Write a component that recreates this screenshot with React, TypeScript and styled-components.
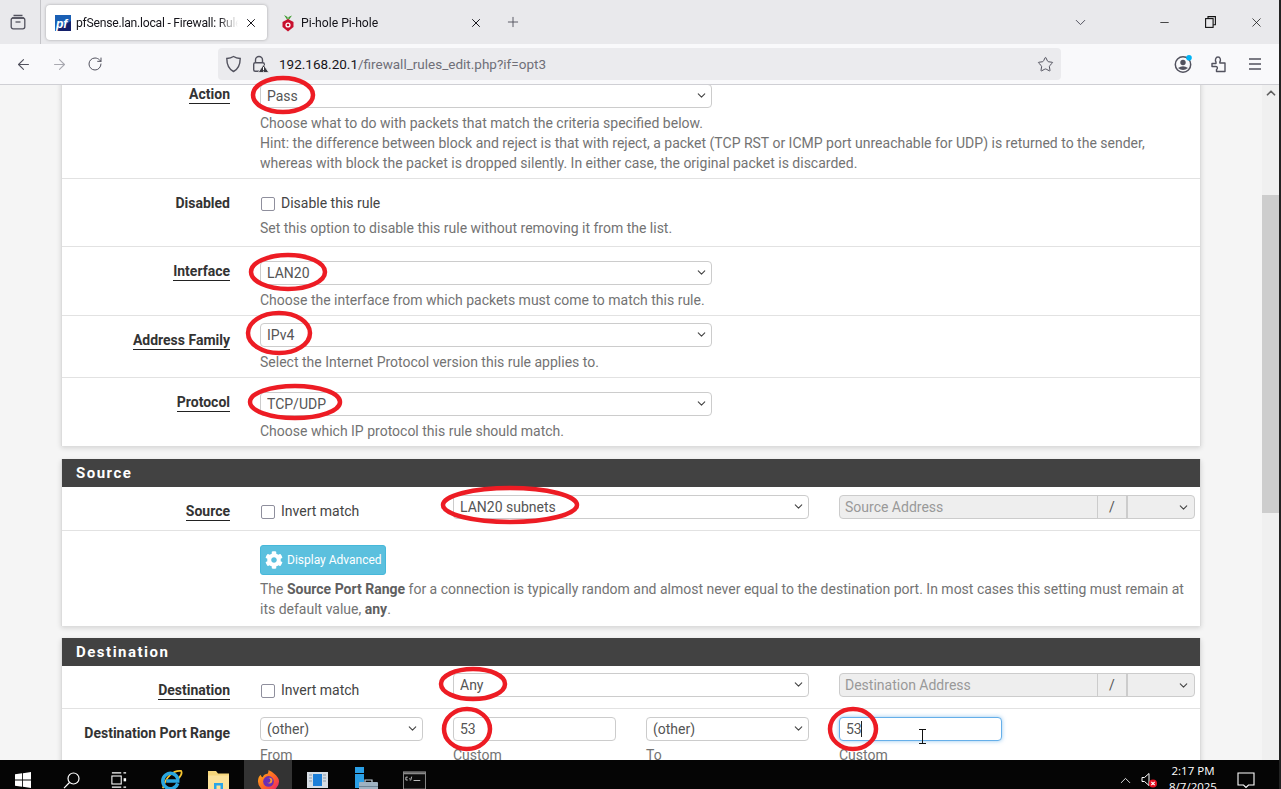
import React from "react";
import styled, { createGlobalStyle } from "styled-components";
import { ArrowLeft, ArrowRight, ChevronDown, ChevronUp, Minus, Plus, RotateCw, Star, X } from "lucide-react";
import { FaCog } from "react-icons/fa";

const GlobalStyle = createGlobalStyle`
  html, body {
    margin: 0;
    padding: 0;
    height: 100%;
    overflow: hidden;
    background: #222;
  }
  * {
    box-sizing: border-box;
  }
`;

const Screen = styled.div`
  position: relative;
  width: 1281px;
  height: 789px;
  padding-right: 2px;
  background: #222;
  overflow: hidden;
  font-family: Roboto, "Liberation Sans", sans-serif;
  display: flex;
  flex-direction: column;
`;

/* browser chrome */
const TabStrip = styled.div`
  height: 44px;
  flex: none;
  background: #e9e9ec;
  display: flex;
  align-items: center;
`;

const SideButton = styled.div`
  width: 41px;
  height: 44px;
  flex: none;
  display: flex;
  align-items: center;
  justify-content: center;
  border-right: 1px solid #c4c4c8;
  padding-right: 5px;
  margin-right: 5px;
  color: #52525e;
`;

const Tab = styled.div<{ $active?: boolean }>`
  width: 221px;
  height: 35px;
  flex: none;
  display: flex;
  align-items: center;
  padding: 0 8px 0 9px;
  gap: 5px;
  border-radius: 4px;
  background: ${(p) => (p.$active ? "#fff" : "transparent")};
  box-shadow: ${(p) => (p.$active ? "0 0 3px rgba(0,0,0,.3)" : "none")};
  font-size: 12.2px;
  color: #15141a;
  margin-top: 1px;
  margin-right: ${(p) => (p.$active ? "4px" : "0")};
`;

const TabTitle = styled.span<{ $tight?: boolean }>`
  flex: 1;
  overflow: hidden;
  white-space: nowrap;
  letter-spacing: ${(p) => (p.$tight ? "-0.25px" : "0")};
  -webkit-mask-image: linear-gradient(to right, #000 88%, transparent);
  mask-image: linear-gradient(to right, #000 88%, transparent);
`;

const TabClose = styled.span`
  width: 16px;
  display: flex;
  justify-content: center;
  color: #15141a;
`;

const NewTab = styled.div`
  width: 24px;
  display: flex;
  justify-content: center;
  color: #52525e;
  margin-left: 9px;
`;

const StripSpacer = styled.div`
  flex: 1;
`;

const ListTabs = styled.div`
  width: 30px;
  display: flex;
  justify-content: center;
  color: #52525e;
  margin-right: 46px;
`;

const WinButton = styled.div`
  width: 46px;
  height: 44px;
  display: flex;
  align-items: center;
  justify-content: center;
  color: #111;
`;

const ToolBar = styled.div`
  height: 41px;
  flex: none;
  background: #f9f9fb;
  border-bottom: 1px solid #cfcfd4;
  display: flex;
  align-items: center;
`;

const NavButton = styled.div<{ $muted?: boolean; $w?: number }>`
  width: ${(p) => p.$w ?? 36}px;
  flex: none;
  display: flex;
  justify-content: center;
  color: ${(p) => (p.$muted ? "#a9a9b0" : "#52525e")};
`;

const BackButton = styled(NavButton)`
  padding-left: 5px;
`;

const UrlBar = styled.div`
  width: 843px;
  height: 32px;
  flex: none;
  margin: 0 104px 0 105px;
  background: #ebebee;
  border-radius: 4px;
  display: flex;
  align-items: center;
  padding: 0 7px 0 7px;
  font-size: 13.5px;
  color: #15141a;
`;

const UrlIcons = styled.div`
  display: flex;
  align-items: center;
  gap: 10px;
  margin-right: 10px;
  color: #52525e;
`;

const UrlText = styled.span`
  flex: 1;
  white-space: nowrap;
`;

const UrlPath = styled.span`
  color: #6f6f78;
`;

/* page */
const Viewport = styled.div`
  flex: 1;
  min-height: 0;
  display: flex;
  background: #f5f5f5;
  overflow: hidden;
`;

const Page = styled.div`
  flex: 1;
  min-width: 0;
  padding: 0 61px 0 61px;
  margin-top: -15px;
`;

const Panel = styled.section<{ $gap?: number }>`
  background: #fff;
  border-left: 1px solid #dcdcdc;
  border-right: 1px solid #dcdcdc;
  box-shadow: 0 2px 5px rgba(0, 0, 0, 0.14);
  margin-bottom: ${(p) => p.$gap ?? 12}px;
  width: 1140px;
`;

const PanelHeading = styled.h2`
  margin: 0;
  height: 28px;
  padding: 0 14px;
  background: #424242;
  color: #fff;
  font-size: 15px;
  font-weight: 700;
  letter-spacing: 1.5px;
  line-height: 28px;
`;

const Row = styled.div<{ $end?: number; $last?: boolean }>`
  display: flex;
  align-items: flex-start;
  padding-bottom: ${(p) => p.$end ?? 5}px;
  border-bottom: ${(p) => (p.$last ? "0" : "1px solid #e2e2e2")};
`;

const LabelCell = styled.div`
  width: 168px;
  flex: none;
  padding-top: 14px;
  text-align: right;
  font-size: 14px;
  line-height: 20px;
  font-weight: 700;
  color: #333;
`;

const Linked = styled.span`
  border-bottom: 1px solid #222;
  padding-bottom: 1px;
`;

const ControlCell = styled.div<{ $top: number }>`
  flex: 1;
  min-width: 0;
  margin-left: 30px;
  padding-top: ${(p) => p.$top}px;
`;

const FieldGrid = styled.div`
  display: grid;
  grid-template-columns: repeat(5, 163px);
  column-gap: 30px;
  align-items: start;
`;

const Span2 = styled.div`
  grid-column: span 2;
`;

const Help = styled.div`
  margin-top: 5px;
  width: 925px;
  font-size: 14px;
  line-height: 20px;
  color: #737373;

  b {
    color: #5f5f5f;
  }
`;

const CheckLine = styled.label<{ $nudge?: number }>`
  display: flex;
  align-items: center;
  gap: 6px;
  height: 20px;
  padding-left: 1px;
  margin-top: ${(p) => p.$nudge ?? 0}px;
  font-size: 14px;
  color: #444;
`;

const CheckBox = styled.input.attrs({ type: "checkbox" })`
  appearance: none;
  width: 14px;
  height: 14px;
  margin: 1px 0 0;
  border: 1px solid #8f8f9d;
  border-radius: 2px;
  background: #fff;
`;

const SelectWrap = styled.div<{ $width?: number }>`
  position: relative;
  width: ${(p) => (p.$width ? `${p.$width}px` : "100%")};
  height: 24px;
`;

const Select = styled.select`
  appearance: none;
  display: block;
  width: 100%;
  height: 24px;
  padding: 0 20px 0 6px;
  border: 1px solid #ccc;
  border-radius: 4px;
  background: #fff;
  font: 14px Roboto, sans-serif;
  color: #555;
  outline: none;
`;

const SelectArrow = styled.span`
  position: absolute;
  right: 4px;
  top: 5px;
  display: flex;
  color: #444;
  pointer-events: none;
`;

const TextInput = styled.input<{ $focused?: boolean }>`
  display: block;
  width: 100%;
  height: 24px;
  padding: 0 6px;
  border: 1px solid ${(p) => (p.$focused ? "#66afe9" : "#ccc")};
  border-radius: 4px;
  background: #fff;
  font: 14px Roboto, sans-serif;
  color: #555;
  outline: none;
  box-shadow: ${(p) => (p.$focused ? "0 0 4px rgba(102,175,233,.7)" : "none")};
`;

const InputWrap = styled.div`
  position: relative;
`;

const Caret = styled.span`
  position: absolute;
  left: 22px;
  top: 4px;
  width: 1px;
  height: 16px;
  background: #222;
`;

const AddressGroup = styled.div`
  display: flex;
  height: 24px;
  border: 1px solid #ccc;
  border-radius: 4px;
  background: #eee;
  color: #777;
`;

const AddressInput = styled.input`
  flex: 1;
  min-width: 0;
  border: 0;
  padding: 0 5px;
  background: transparent;
  font: 14px Roboto, sans-serif;
  outline: none;

  &::placeholder {
    color: #999;
    opacity: 1;
  }
`;

const AddressSlash = styled.span`
  width: 31px;
  flex: none;
  border-left: 1px solid #ccc;
  border-right: 2px solid #ccc;
  text-align: center;
  font-size: 14px;
  line-height: 22px;
  color: #555;
`;

const MaskSelect = styled.div`
  position: relative;
  width: 66px;
  flex: none;
`;

const SubLabel = styled.div`
  margin-top: 4px;
  font-size: 14px;
  line-height: 20px;
  color: #737373;
`;

const AdvancedButton = styled.button`
  display: flex;
  align-items: center;
  gap: 4px;
  width: 126px;
  height: 30px;
  padding: 0 0 0 4px;
  margin-bottom: -1px;
  border: 1px solid #46b8da;
  border-radius: 3px;
  background: #5bc0de;
  color: #fff;
  font: 12px Roboto, sans-serif;
  white-space: nowrap;
`;

/* scrollbar */
const ScrollTrack = styled.div`
  width: 17px;
  flex: none;
  margin-left: auto;
  background: #f0f0f0;
  display: flex;
  flex-direction: column;
`;

const ScrollUp = styled.div`
  height: 110px;
  flex: none;
  display: flex;
  justify-content: center;
  align-items: flex-start;
  color: #606060;
  padding-top: 1px;
`;

const ScrollThumb = styled.div`
  height: 318px;
  flex: none;
  background: #cdcdcd;
`;

/* taskbar: only the top 29px of a 40px bar is on screen */
const TaskBar = styled.div`
  height: 29px;
  flex: none;
  background: #050505;
  display: flex;
  align-items: flex-start;
  padding-right: 16px;
  overflow: hidden;
`;

const TaskItem = styled.div<{ $active?: boolean; $w: number; $shift?: number }>`
  width: ${(p) => p.$w}px;
  height: 40px;
  flex: none;
  display: flex;
  align-items: center;
  justify-content: center;
  padding-right: ${(p) => p.$shift ?? 0}px;
  background: ${(p) => (p.$active ? "#333" : "transparent")};
  color: #fff;
`;

const TraySpacer = styled.div`
  flex: 1;
`;

const TrayIcon = styled.div<{ $w: number }>`
  width: ${(p) => p.$w}px;
  height: 40px;
  flex: none;
  display: flex;
  align-items: center;
  justify-content: center;
  color: #fff;
`;

const Clock = styled.div`
  width: 72px;
  flex: none;
  padding-top: 3px;
  text-align: center;
  color: #fff;
  font: 11.5px/16px "Open Sans", sans-serif;
`;

/* annotations lying over the whole window */
const Markup = styled.svg`
  position: absolute;
  left: 0;
  top: 0;
  pointer-events: none;
`;

const TextCursor = styled.svg`
  position: absolute;
  left: 918px;
  top: 729px;
  pointer-events: none;
`;

const circles = [
  { cx: 283, cy: 95, rx: 30, ry: 17 },
  { cx: 288, cy: 272, rx: 37, ry: 17 },
  { cx: 279, cy: 333, rx: 31, ry: 20 },
  { cx: 295, cy: 402, rx: 45, ry: 16 },
  { cx: 510, cy: 505, rx: 67, ry: 17 },
  { cx: 473, cy: 684, rx: 32, ry: 15 },
  { cx: 467, cy: 729, rx: 23, ry: 20 },
  { cx: 853, cy: 729, rx: 23, ry: 20 },
];

function Drop({ value, width }: { value?: string; width?: number }) {
  return (
    <SelectWrap $width={width}>
      <Select value={value ?? ""} onChange={() => {}}>
        <option value={value ?? ""}>{value ?? ""}</option>
      </Select>
      <SelectArrow>
        <ChevronDown size={13} strokeWidth={2} />
      </SelectArrow>
    </SelectWrap>
  );
}

function AddressField({ placeholder }: { placeholder: string }) {
  return (
    <AddressGroup>
      <AddressInput disabled placeholder={placeholder} />
      <AddressSlash>/</AddressSlash>
      <MaskSelect>
        <SelectArrow>
          <ChevronDown size={13} strokeWidth={2} />
        </SelectArrow>
      </MaskSelect>
    </AddressGroup>
  );
}

const PfFavicon = () => (
  <svg width="16" height="16" viewBox="0 0 16 16">
    <rect width="16" height="16" fill="#1a5fb4" />
    <path d="M0 16 L16 6 V16 Z" fill="#14206b" />
    <text x="1" y="12.5" fontSize="12" fontStyle="italic" fontWeight="700" fill="#fff" fontFamily="Liberation Sans">pf</text>
  </svg>
);

const PiFavicon = () => (
  <svg width="16" height="18" viewBox="0 0 16 18">
    <path d="M8 7 L4 1 L7.5 3 Z M8 7 L12 1.5 L8.5 3 Z" fill="#3b9a2c" />
    <path d="M8 5 L13.5 8 V13 L8 17.5 L2.5 13 V8 Z" fill="#c8102e" />
    <circle cx="8" cy="11" r="2.6" fill="#fff" />
    <circle cx="8" cy="11" r="1.3" fill="#c8102e" />
  </svg>
);

const TabsIcon = () => (
  <svg width="16" height="16" viewBox="0 0 16 16" fill="none" stroke="currentColor" strokeWidth="1.3">
    <path d="M3.5 1.5 h9 M2 4 h12" />
    <rect x="1.2" y="4" width="13.6" height="10.8" rx="2" />
    <path d="M5.5 8 h5" />
  </svg>
);

const ShieldIcon = () => (
  <svg width="17" height="18" viewBox="0 0 17 18" fill="none" stroke="currentColor" strokeWidth="1.4">
    <path d="M8.5 1.5 C6 3 4 3.3 1.8 3.5 C1.8 10 3.5 14 8.5 16.5 C13.5 14 15.2 10 15.2 3.5 C13 3.3 11 3 8.5 1.5 Z" />
  </svg>
);

const LockWarnIcon = () => (
  <svg width="17" height="18" viewBox="0 0 17 18">
    <path d="M3.5 8 V5 a3.5 3.5 0 0 1 7 0 V8" fill="none" stroke="currentColor" strokeWidth="1.4" />
    <rect x="1.7" y="7.7" width="10.6" height="8.6" rx="1.5" fill="none" stroke="currentColor" strokeWidth="1.4" />
    <path d="M11.5 9.5 L16.8 17.5 H6.2 Z" fill="#3a3a42" stroke="#ebebee" strokeWidth="0.8" />
    <path d="M11.5 12 V15 M11.5 15.8 v.8" stroke="#fff" strokeWidth="1" />
  </svg>
);

const AccountIcon = () => (
  <svg width="20" height="20" viewBox="0 0 20 20">
    <circle cx="10" cy="10.5" r="7.7" fill="none" stroke="#52525e" strokeWidth="1.5" />
    <circle cx="10" cy="8.5" r="2.7" fill="#52525e" />
    <path d="M5 14 Q10 10.5 15 14 Q10 18 5 14 Z" fill="#52525e" />
    <circle cx="16" cy="3.7" r="2.8" fill="#00b3f4" />
  </svg>
);

const ExtensionIcon = () => (
  <svg width="16" height="18" viewBox="0 0 16 18" fill="none" stroke="#52525e" strokeWidth="1.4" strokeLinejoin="round">
    <path d="M1 8.5 H5 V7 C3.8 5.5 4.5 2 7 2 C9.5 2 10 5.5 8.8 7 V8 H14 V16.5 H5.5 V14.5 C7 13.5 6.5 11.5 5 11.5 H1 Z" />
  </svg>
);

const MenuIcon = () => (
  <svg width="16" height="14" viewBox="0 0 16 14" stroke="#52525e" strokeWidth="1.4">
    <path d="M2 2 H14 M2 7 H14 M2 12 H14" />
  </svg>
);

const RestoreIcon = () => (
  <svg width="11" height="12" viewBox="0 0 11 12" fill="none" stroke="#111" strokeWidth="1.1">
    <rect x="0.6" y="2.6" width="7.5" height="8.8" fill="#e9e9ec" />
    <path d="M3 2.5 V0.6 H10.4 V8.8 H8.2" />
  </svg>
);

const WindowsLogo = () => (
  <svg width="16" height="16" viewBox="0 0 17 17" fill="#fff">
    <path d="M0 2.5 L7.5 1.4 V8 H0 Z M8.4 1.2 L17 0 V8 H8.4 Z M0 9 H7.5 V15.6 L0 14.5 Z M8.4 9 H17 V17 L8.4 15.8 Z" />
  </svg>
);

const SearchIcon = () => (
  <svg width="17" height="17" viewBox="0 0 17 17" fill="none" stroke="#fff" strokeWidth="1.2">
    <circle cx="10.5" cy="6.5" r="5.5" />
    <path d="M6.5 10.5 L1 16.2" />
  </svg>
);

const TaskViewIcon = () => (
  <svg width="16" height="16" viewBox="0 0 18 18" fill="none" stroke="#fff" strokeWidth="1.2">
    <rect x="1" y="4.5" width="10.5" height="9" />
    <path d="M1 1 H11.5 M1 17 H11.5 M14 1 H17 M14 17 H17" />
    <rect x="14.2" y="7" width="2.8" height="3.5" fill="#fff" stroke="none" />
  </svg>
);

const IeLogo = () => (
  <svg width="23" height="23" viewBox="0 0 24 24" fill="none">
    <path d="M3 20 C6 8 14 1 22 2 C24 5 21 8 19 10" stroke="#f4c430" strokeWidth="1.8" />
    <path d="M18.5 15 A8 8 0 1 1 18.5 10 V12.5 H6.5" stroke="#2aa7e0" strokeWidth="3.6" />
  </svg>
);

const FolderLogo = () => (
  <svg width="22" height="22" viewBox="0 0 22 22">
    <path d="M0 2 H8 L10 4.5 H21 V20 H0 Z" fill="#f6d67a" />
    <path d="M0 6.5 H21 V20 H0 Z" fill="#fce29a" />
    <path d="M6 21 V14 H15 V21 H12.5 V16.5 H8.5 V21 Z" fill="#2aa5e8" />
  </svg>
);

const FirefoxLogo = () => (
  <svg width="23" height="23" viewBox="0 0 24 24">
    <defs>
      <linearGradient id="ff" x1="0" y1="0" x2="1" y2="1">
        <stop offset="0" stopColor="#ffb30f" />
        <stop offset="0.6" stopColor="#ff5a2c" />
        <stop offset="1" stopColor="#e31587" />
      </linearGradient>
    </defs>
    <path d="M12 1 C16 3 17 4 18 5 C21 7.5 23 10 23 13 A11 10.5 0 0 1 1 13 C1 9 2.5 7 4 6 C4 7.5 5 8.5 6 8.5 C7 6 9 5 11 5 C12 3.5 12 2 12 1 Z" fill="url(#ff)" />
    <circle cx="12" cy="13" r="5.6" fill="#6b2fb5" />
    <circle cx="13" cy="12" r="3" fill="#ff9a2c" />
    <circle cx="11.5" cy="12" r="2.5" fill="#6b2fb5" />
  </svg>
);

const ManagerLogo = () => (
  <svg width="21" height="16" viewBox="0 0 21 16">
    <rect width="21" height="16" fill="#d6dde4" />
    <rect x="6" y="2" width="9" height="12" fill="#1d7fd8" />
    <path d="M2 3 H5 M2 6 H5 M2 9 H5 M16 3 H19 M16 6 H19 M16 9 H19" stroke="#8b99a8" strokeWidth="1" />
  </svg>
);

const ServerLogo = () => (
  <svg width="24" height="26" viewBox="0 0 24 26">
    <rect x="1" y="0" width="9" height="6" fill="#2a9fe6" />
    <rect x="1" y="7" width="9" height="14" fill="#2a9fe6" />
    <rect x="5" y="15" width="19" height="11" rx="1" fill="#9fb2c2" />
    <path d="M11 15 V13 H18 V15" stroke="#c3d0da" strokeWidth="1.2" fill="none" />
    <rect x="5" y="19" width="19" height="1" fill="#6e8496" />
  </svg>
);

const ConsoleLogo = () => (
  <svg width="23" height="19" viewBox="0 0 24 19">
    <rect x="0.5" y="0.5" width="23" height="18" fill="#0b0b0b" stroke="#8a8a8a" />
    <rect x="1" y="1" width="22" height="2" fill="#8a8a8a" />
    <path d="M3 6 H5 M3 6 V9 H5 M7 7 V7.8 M7 8.6 V9.2 M9 5.5 L8 9.5 M11 9.5 H18" stroke="#d8d8d8" strokeWidth="0.9" fill="none" />
  </svg>
);

const SpeakerMuted = () => (
  <svg width="20" height="17" viewBox="0 0 20 17">
    <path d="M5 5.5 H7.5 L12 1.5 V13.5 L7.5 9.5 H5 Z" fill="none" stroke="#fff" strokeWidth="1" />
    <circle cx="16" cy="11.5" r="4" fill="#e81123" />
    <path d="M14.3 9.8 L17.7 13.2 M17.7 9.8 L14.3 13.2" stroke="#fff" strokeWidth="1.2" />
  </svg>
);

const NotifyIcon = () => (
  <svg width="18" height="17" viewBox="0 0 18 17" fill="none" stroke="#fff" strokeWidth="1.1">
    <path d="M1 1 H17 V13 H11.5 L9 15.5 L6.5 13 H1 Z" />
  </svg>
);

export default function App() {
  return (
    <Screen>
      <GlobalStyle />
      <TabStrip>
        <SideButton>
          <TabsIcon />
        </SideButton>
        <Tab $active>
          <PfFavicon />
          <TabTitle $tight>pfSense.lan.local - Firewall: Rules: Edit</TabTitle>
          <TabClose>
            <X size={14} strokeWidth={1.7} />
          </TabClose>
        </Tab>
        <Tab>
          <PiFavicon />
          <TabTitle>Pi-hole Pi-hole</TabTitle>
          <TabClose>
            <X size={14} strokeWidth={1.7} />
          </TabClose>
        </Tab>
        <NewTab>
          <Plus size={16} strokeWidth={1.4} />
        </NewTab>
        <StripSpacer />
        <ListTabs>
          <ChevronDown size={17} strokeWidth={1.4} />
        </ListTabs>
        <WinButton>
          <Minus size={13} strokeWidth={1.4} color="#111" />
        </WinButton>
        <WinButton>
          <RestoreIcon />
        </WinButton>
        <WinButton>
          <X size={15} strokeWidth={1.2} color="#111" />
        </WinButton>
      </TabStrip>

      <ToolBar>
        <BackButton $w={41}>
          <ArrowLeft size={17} strokeWidth={1.5} />
        </BackButton>
        <NavButton $muted $w={36}>
          <ArrowRight size={17} strokeWidth={1.5} />
        </NavButton>
        <NavButton $w={36}>
          <RotateCw size={16} strokeWidth={1.5} />
        </NavButton>
        <UrlBar>
          <UrlIcons>
            <ShieldIcon />
            <LockWarnIcon />
          </UrlIcons>
          <UrlText>
            192.168.20.1<UrlPath>/firewall_rules_edit.php?if=opt3</UrlPath>
          </UrlText>
          <Star size={17} strokeWidth={1.4} color="#52525e" />
        </UrlBar>
        <NavButton>
          <AccountIcon />
        </NavButton>
        <NavButton>
          <ExtensionIcon />
        </NavButton>
        <NavButton>
          <MenuIcon />
        </NavButton>
      </ToolBar>

      <Viewport>
        <Page>
          <Panel $gap={13}>
            <Row>
              <LabelCell>
                <Linked>Action</Linked>
              </LabelCell>
              <ControlCell $top={14}>
                <Drop value="Pass" width={452} />
                <Help>
                  Choose what to do with packets that match the criteria specified below.
                  <br />
                  Hint: the difference between block and reject is that with reject, a packet (TCP RST or ICMP port unreachable for UDP) is returned to the sender, whereas with block the packet is dropped silently. In either case, the original packet is discarded.
                </Help>
              </ControlCell>
            </Row>
            <Row $end={8}>
              <LabelCell>Disabled</LabelCell>
              <ControlCell $top={14}>
                <CheckLine>
                  <CheckBox />
                  Disable this rule
                </CheckLine>
                <Help>Set this option to disable this rule without removing it from the list.</Help>
              </ControlCell>
            </Row>
            <Row>
              <LabelCell>
                <Linked>Interface</Linked>
              </LabelCell>
              <ControlCell $top={14}>
                <Drop value="LAN20" width={452} />
                <Help>Choose the interface from which packets must come to match this rule.</Help>
              </ControlCell>
            </Row>
            <Row>
              <LabelCell>
                <Linked>Address Family</Linked>
              </LabelCell>
              <ControlCell $top={7}>
                <Drop value="IPv4" width={452} />
                <Help>Select the Internet Protocol version this rule applies to.</Help>
              </ControlCell>
            </Row>
            <Row $last>
              <LabelCell>
                <Linked>Protocol</Linked>
              </LabelCell>
              <ControlCell $top={14}>
                <Drop value="TCP/UDP" width={452} />
                <Help>Choose which IP protocol this rule should match.</Help>
              </ControlCell>
            </Row>
          </Panel>

          <Panel>
            <PanelHeading>Source</PanelHeading>
            <Row $end={9}>
              <LabelCell>
                <Linked>Source</Linked>
              </LabelCell>
              <ControlCell $top={8}>
                <FieldGrid>
                  <CheckLine $nudge={6}>
                    <CheckBox />
                    Invert match
                  </CheckLine>
                  <Span2>
                    <Drop value="LAN20 subnets" />
                  </Span2>
                  <Span2>
                    <AddressField placeholder="Source Address" />
                  </Span2>
                </FieldGrid>
              </ControlCell>
            </Row>
            <Row $end={7} $last>
              <LabelCell />
              <ControlCell $top={14}>
                <AdvancedButton>
                  <FaCog size={18} />
                  Display Advanced
                </AdvancedButton>
                <Help>
                  The <b>Source Port Range</b> for a connection is typically random and almost never equal to the destination port. In most cases this setting must remain at its default value, <b>any</b>.
                </Help>
              </ControlCell>
            </Row>
          </Panel>

          <Panel>
            <PanelHeading>Destination</PanelHeading>
            <Row $end={8}>
              <LabelCell>
                <Linked>Destination</Linked>
              </LabelCell>
              <ControlCell $top={7}>
                <FieldGrid>
                  <CheckLine $nudge={7}>
                    <CheckBox />
                    Invert match
                  </CheckLine>
                  <Span2>
                    <Drop value="Any" />
                  </Span2>
                  <Span2>
                    <AddressField placeholder="Destination Address" />
                  </Span2>
                </FieldGrid>
              </ControlCell>
            </Row>
            <Row $last>
              <LabelCell>Destination Port Range</LabelCell>
              <ControlCell $top={8}>
                <FieldGrid>
                  <div>
                    <Drop value="(other)" />
                    <SubLabel>From</SubLabel>
                  </div>
                  <div>
                    <TextInput value="53" readOnly />
                    <SubLabel>Custom</SubLabel>
                  </div>
                  <div>
                    <Drop value="(other)" />
                    <SubLabel>To</SubLabel>
                  </div>
                  <div>
                    <InputWrap>
                      <TextInput $focused value="53" readOnly />
                      <Caret />
                    </InputWrap>
                    <SubLabel>Custom</SubLabel>
                  </div>
                </FieldGrid>
              </ControlCell>
            </Row>
          </Panel>
        </Page>
        <ScrollTrack>
          <ScrollUp>
            <ChevronUp size={14} strokeWidth={3} />
          </ScrollUp>
          <ScrollThumb />
        </ScrollTrack>
      </Viewport>

      <TaskBar>
        <TaskItem $w={48} $shift={2}>
          <WindowsLogo />
        </TaskItem>
        <TaskItem $w={46}>
          <SearchIcon />
        </TaskItem>
        <TaskItem $w={50}>
          <TaskViewIcon />
        </TaskItem>
        <TaskItem $w={54}>
          <IeLogo />
        </TaskItem>
        <TaskItem $w={46} $shift={4}>
          <FolderLogo />
        </TaskItem>
        <TaskItem $w={48} $active>
          <FirefoxLogo />
        </TaskItem>
        <TaskItem $w={50}>
          <ManagerLogo />
        </TaskItem>
        <TaskItem $w={48}>
          <ServerLogo />
        </TaskItem>
        <TaskItem $w={48}>
          <ConsoleLogo />
        </TaskItem>
        <TraySpacer />
        <TrayIcon $w={24}>
          <ChevronUp size={17} strokeWidth={1.2} />
        </TrayIcon>
        <TrayIcon $w={20}>
          <SpeakerMuted />
        </TrayIcon>
        <Clock>
          2:17 PM
          <br />
          8/7/2025
        </Clock>
        <TrayIcon $w={34}>
          <NotifyIcon />
        </TrayIcon>
      </TaskBar>

      <Markup width="1281" height="789" viewBox="0 0 1281 789">
        {circles.map((c, i) => (
          <ellipse key={i} cx={c.cx} cy={c.cy} rx={c.rx} ry={c.ry} fill="none" stroke="#ed1c24" strokeWidth="4.5" />
        ))}
      </Markup>
      <TextCursor width="9" height="15" viewBox="0 0 9 15" fill="none" stroke="#111" strokeWidth="1">
        <path d="M1 .5 H8 M4.5 .5 V14.5 M1 14.5 H8" />
      </TextCursor>
    </Screen>
  );
}
